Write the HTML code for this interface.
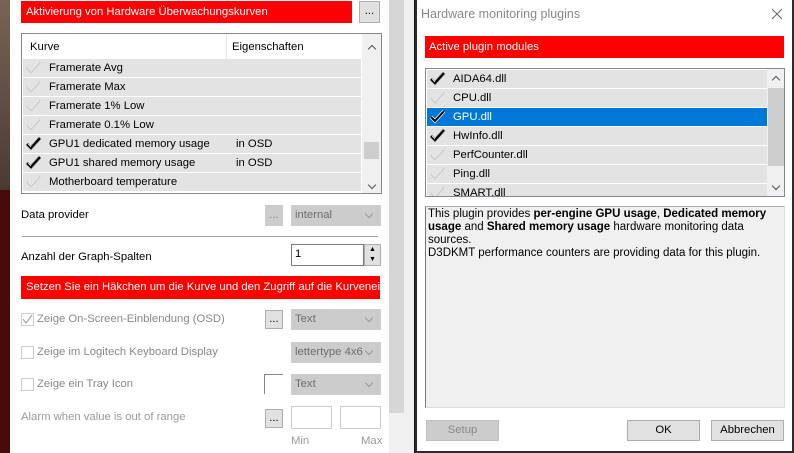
<!DOCTYPE html>
<html><head><meta charset="utf-8"><style>
*{box-sizing:border-box;margin:0;padding:0}
body{width:794px;height:453px;overflow:hidden;position:relative;background:#1a1414;font-family:"Liberation Sans",sans-serif;font-size:11.3px;color:#000}
.a{position:absolute}
.red{background:#f00;color:#fff;padding-left:5px;line-height:22px;white-space:nowrap;overflow:hidden}
.btn{border:1px solid #adadad;background:#e1e1e1;text-align:center}
.row{position:absolute;left:1px;width:338px;height:18px;background:#e3e3e3;line-height:18px}
.chk{position:absolute;left:2px;top:0px;width:18px;height:18px}
.lbl{position:absolute;white-space:nowrap}
.sel{border:1px solid #cfcfcf;background:#ccc;color:#6d6d6d;padding-left:3px;line-height:19px;white-space:nowrap;overflow:hidden}
.sel:after{content:"";position:absolute;right:8px;top:5px;width:5px;height:5px;border-right:1px solid #999;border-bottom:1px solid #999;transform:rotate(45deg)}
.cb{border:1px solid #ccc;background:#fff;width:13px;height:13px}
.g{color:#888}
.drow{position:absolute;left:1px;width:340px;height:18px;background:#e3e3e3;line-height:18px}
.up,.dn{position:absolute;width:6px;height:6px;border-left:1.5px solid #555;border-top:1.5px solid #555}
.up{transform:rotate(45deg)}.dn{transform:rotate(225deg)}
</style></head><body>
<div class="a" style="left:0;top:0;width:10px;height:190px;background:linear-gradient(#7a6356,#4a3a34)"></div>
<div class="a" style="left:0;top:190px;width:10px;height:263px;background:#4a0a0a"></div>
<div class="a" style="left:10px;top:0;width:379px;height:453px;background:#fff"></div>
<div class="a" style="left:389px;top:0;width:15px;height:413px;background:#d6d6d6"></div>
<div class="a" style="left:404px;top:0;width:10px;height:453px;background:#f0f0f0"></div>
<div class="a" style="left:389px;top:413px;width:15px;height:40px;background:#f0f0f0"></div>

<div class="a red" style="left:21px;top:1px;width:331px;height:22px">Aktivierung von Hardware Überwachungskurven</div>
<div class="a btn" style="left:359px;top:1px;width:21px;height:22px;line-height:18px">...</div>

<svg width="0" height="0" style="position:absolute"><defs>
<symbol id="ck" viewBox="0 0 18 18"><path d="M2 9l4 4 9-10" fill="none" stroke="#666" stroke-width="3.5" opacity=".5"/><path d="M2 9l4 4 9-10" fill="none" stroke="#000" stroke-width="2.2"/><path d="M3 9l3 3" stroke="#fff" stroke-width=".8"/></symbol>
<symbol id="cg" viewBox="0 0 18 18"><path d="M2 9l4 4 9-10" fill="none" stroke="#ccc" stroke-width="2.2"/><path d="M3 9l3 3 8-9" fill="none" stroke="#eee" stroke-width=".8"/></symbol>
</defs></svg>

<div class="a" style="left:21px;top:33px;width:361px;height:161px;border:1px solid #828790;background:#fff;overflow:hidden">
 <div class="lbl" style="left:8px;top:7px">Kurve</div>
 <div class="a" style="left:204px;top:1px;width:1px;height:24px;background:#e5e5e5"></div>
 <div class="lbl" style="left:210px;top:7px">Eigenschaften</div>
 <div class="row" style="top:25px"><svg class="chk"><use href="#cg"/></svg><span class="lbl" style="left:26px">Framerate Avg</span></div>
 <div class="row" style="top:44px"><svg class="chk"><use href="#cg"/></svg><span class="lbl" style="left:26px">Framerate Max</span></div>
 <div class="row" style="top:63px"><svg class="chk"><use href="#cg"/></svg><span class="lbl" style="left:26px">Framerate 1% Low</span></div>
 <div class="row" style="top:82px"><svg class="chk"><use href="#cg"/></svg><span class="lbl" style="left:26px">Framerate 0.1% Low</span></div>
 <div class="row" style="top:101px"><svg class="chk"><use href="#ck"/></svg><span class="lbl" style="left:26px">GPU1 dedicated memory usage</span><span class="lbl" style="left:213px">in OSD</span></div>
 <div class="row" style="top:120px"><svg class="chk"><use href="#ck"/></svg><span class="lbl" style="left:26px">GPU1 shared memory usage</span><span class="lbl" style="left:213px">in OSD</span></div>
 <div class="row" style="top:139px"><svg class="chk"><use href="#cg"/></svg><span class="lbl" style="left:26px">Motherboard temperature</span></div>
 <div class="a" style="left:340px;top:0;width:19px;height:159px;background:#f0f0f0"></div>
 <div class="up" style="left:347px;top:12px"></div>
 <div class="a" style="left:342px;top:108px;width:15px;height:17px;background:#cdcdcd"></div>
 <div class="dn" style="left:347px;top:148px"></div>
</div>

<div class="lbl" style="left:21px;top:209px">Data provider</div>
<div class="a btn" style="left:265px;top:205px;width:18px;height:21px;border-color:#ccc;background:#ccc;color:#888;line-height:18px">...</div>
<div class="a sel" style="left:291px;top:205px;width:90px;height:21px">internal</div>
<div class="a" style="left:22px;top:236px;width:356px;height:1px;background:#a0a0a0"></div>
<div class="lbl" style="left:21px;top:251px">Anzahl der Graph-Spalten</div>
<div class="a" style="left:291px;top:244px;width:73px;height:22px;border:1px solid #7a7a7a;padding:3px 3px">1</div>
<div class="a" style="left:364px;top:244px;width:17px;height:22px;border:1px solid #adadad;background:#e1e1e1;font-size:7px;line-height:10px;text-align:center">▲<br>▼</div>
<div class="a red" style="left:21px;top:276px;width:359px;height:23px">Setzen Sie ein Häkchen um die Kurve und den Zugriff auf die Kurveneigenschaften</div>

<div class="a cb" style="left:21px;top:313px"></div>
<svg class="a" style="left:21px;top:313px" width="13" height="13"><path d="M2 6l3 4 6-8" fill="none" stroke="#aaa" stroke-width="1.3"/></svg>
<div class="lbl g" style="left:37px;top:313px">Zeige On-Screen-Einblendung (OSD)</div>
<div class="a btn" style="left:265px;top:310px;width:18px;height:19px;line-height:16px">...</div>
<div class="a sel" style="left:291px;top:309px;width:90px;height:21px">Text</div>
<div class="a cb" style="left:21px;top:346px"></div>
<div class="lbl g" style="left:37px;top:346px">Zeige im Logitech Keyboard Display</div>
<div class="a sel" style="left:291px;top:342px;width:90px;height:21px">lettertype 4x6</div>
<div class="a cb" style="left:21px;top:378px"></div>
<div class="lbl g" style="left:37px;top:378px">Zeige ein Tray Icon</div>
<div class="a" style="left:264px;top:374px;width:19px;height:20px;border-left:1px solid #888;border-top:1px solid #888"></div>
<div class="a sel" style="left:291px;top:374px;width:90px;height:21px">Text</div>
<div class="lbl" style="left:21px;top:411px;color:#999">Alarm when value is out of range</div>
<div class="a btn" style="left:265px;top:409px;width:18px;height:19px;line-height:16px">...</div>
<div class="a" style="left:291px;top:406px;width:41px;height:23px;border:1px solid #ccc"></div>
<div class="a" style="left:340px;top:406px;width:41px;height:23px;border:1px solid #ccc"></div>
<div class="lbl" style="left:291px;top:435px;color:#999">Min</div>
<div class="lbl" style="left:361px;top:435px;color:#999">Max</div>

<!-- dialog -->
<div class="a" style="left:415px;top:0;width:379px;height:453px;background:#2b2b2b"></div>
<div class="a" style="left:417px;top:0;width:375px;height:451px;background:#fff"></div>
<div class="lbl" style="left:421px;top:7px;font-size:12.5px;color:#888">Hardware monitoring plugins</div>
<svg class="a" style="left:771px;top:8px" width="12" height="12"><path d="M1 1l10 10M11 1L1 11" stroke="#666" stroke-width="1"/></svg>
<div class="a red" style="left:425px;top:36px;width:359px;height:22px;padding-left:4px">Active plugin modules</div>
<div class="a" style="left:425px;top:68px;width:360px;height:129px;border:1px solid #828790;background:#fff;overflow:hidden">
 <div class="drow" style="top:1px"><svg class="chk"><use href="#ck"/></svg><span class="lbl" style="left:26px">AIDA64.dll</span></div>
 <div class="drow" style="top:20px"><svg class="chk"><use href="#cg"/></svg><span class="lbl" style="left:26px">CPU.dll</span></div>
 <div class="drow" style="top:39px;background:#0078d7;color:#fff"><svg class="chk" viewBox="0 0 18 18"><path d="M2 9l4 4 9-10" fill="none" stroke="#fff" stroke-width="3.5"/><path d="M2 9l4 4 9-10" fill="none" stroke="#000" stroke-width="2"/></svg><span class="lbl" style="left:26px">GPU.dll</span></div>
 <div class="drow" style="top:58px"><svg class="chk"><use href="#ck"/></svg><span class="lbl" style="left:26px">HwInfo.dll</span></div>
 <div class="drow" style="top:77px"><svg class="chk"><use href="#cg"/></svg><span class="lbl" style="left:26px">PerfCounter.dll</span></div>
 <div class="drow" style="top:96px"><svg class="chk"><use href="#cg"/></svg><span class="lbl" style="left:26px">Ping.dll</span></div>
 <div class="drow" style="top:115px"><svg class="chk"><use href="#cg"/></svg><span class="lbl" style="left:26px">SMART.dll</span></div>
 <div class="a" style="left:341px;top:0;width:18px;height:127px;background:#f0f0f0"></div>
 <div class="up" style="left:347px;top:8px"></div>
 <div class="a" style="left:342px;top:19px;width:16px;height:78px;background:#cdcdcd"></div>
 <div class="dn" style="left:347px;top:114px"></div>
</div>
<div class="a" style="left:425px;top:206px;width:360px;height:202px;background:#f0f0f0;border-left:1px solid #777;border-top:1px solid #aaa;border-right:1px solid #ddd;border-bottom:1px solid #ddd;padding:1px 2px;line-height:13px;font-size:11.5px">This plugin provides <b>per-engine GPU usage</b>, <b>Dedicated memory usage</b> and <b>Shared memory usage</b> hardware monitoring data sources.<br>D3DKMT performance counters are providing data for this plugin.</div>
<div class="a btn" style="left:426px;top:420px;width:73px;height:21px;background:#ccc;border-color:#bfbfbf;color:#888;line-height:19px">Setup</div>
<div class="a btn" style="left:627px;top:420px;width:73px;height:21px;line-height:19px">OK</div>
<div class="a btn" style="left:711px;top:420px;width:73px;height:21px;line-height:19px">Abbrechen</div>
</body></html>
